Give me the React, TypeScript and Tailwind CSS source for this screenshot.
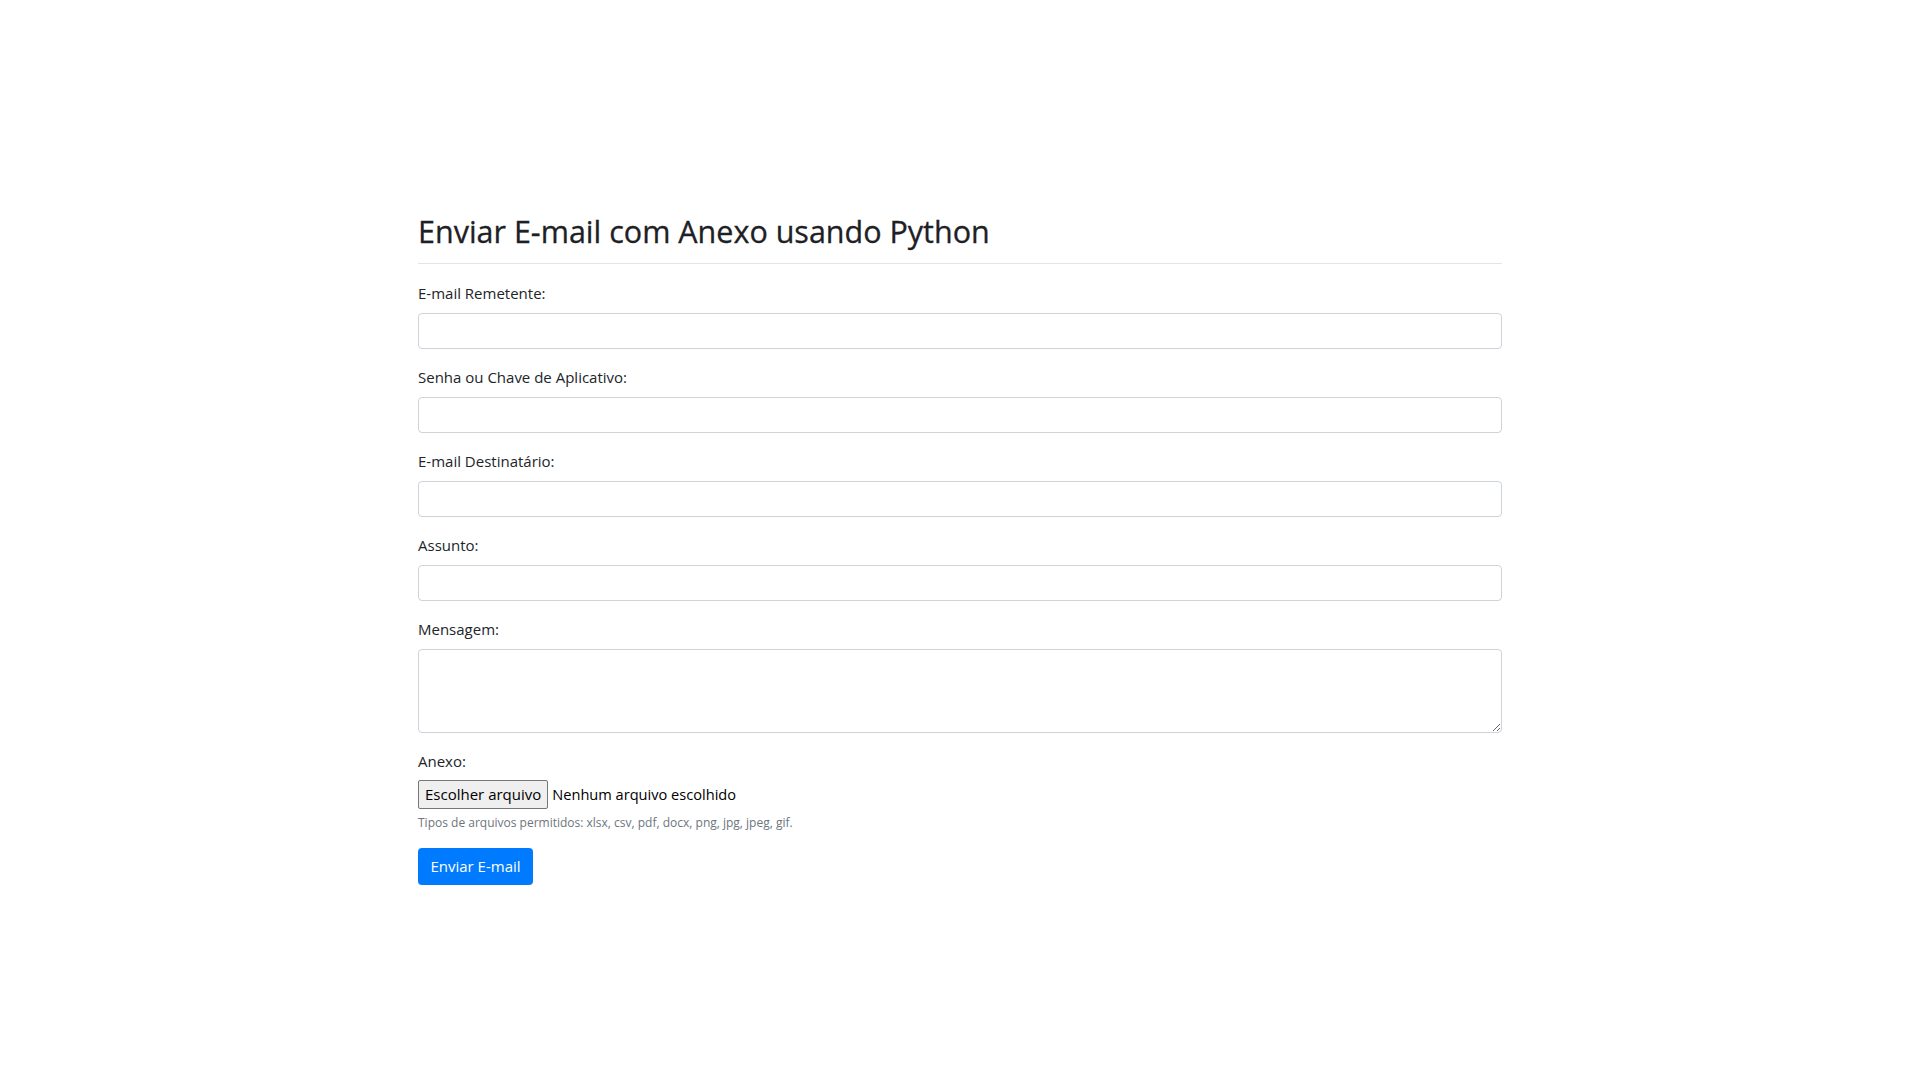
import { useState } from "react";

const fields = [
  { id: "remetente", label: "E-mail Remetente:", type: "email" },
  { id: "senha", label: "Senha ou Chave de Aplicativo:", type: "password" },
  { id: "destinatario", label: "E-mail Destinatário:", type: "email" },
  { id: "assunto", label: "Assunto:", type: "text" },
];

export default function App() {
  const [values, setValues] = useState<Record<string, string>>({});
  const [mensagem, setMensagem] = useState("");

  const handleSubmit = (e: React.FormEvent) => {
    e.preventDefault();
  };

  return (
    <div
      className="min-h-screen bg-white text-[#212529]"
      style={{ fontFamily: '"Open Sans", "Noto Sans", sans-serif' }}
    >
      <div className="mx-auto w-[1084px] pt-[212px]">
        {/* Title */}
        <h2 className="text-[30.5px] leading-[38px] font-normal text-[#1d2125] [-webkit-text-stroke:0.3px_#1d2125] pb-[13px] border-b border-[#e5e5e5]">
          Enviar E-mail com Anexo usando Python
        </h2>

        <form onSubmit={handleSubmit} className="mt-[17px]">
          {fields.map((f) => (
            <div key={f.id} className="mb-4">
              <label htmlFor={f.id} className="block text-[15px] leading-6 mb-2">
                {f.label}
              </label>
              <input
                id={f.id}
                type={f.type}
                value={values[f.id] || ""}
                onChange={(e) => setValues({ ...values, [f.id]: e.target.value })}
                className="block w-full h-[36px] px-3 rounded border border-[#ced4da] bg-white focus:outline-none"
              />
            </div>
          ))}

          <div className="mb-4">
            <label htmlFor="mensagem" className="block text-[15px] leading-6 mb-2">
              Mensagem:
            </label>
            <textarea
              id="mensagem"
              value={mensagem}
              onChange={(e) => setMensagem(e.target.value)}
              className="block w-full h-[84px] px-3 py-1.5 rounded border border-[#ced4da] bg-white focus:outline-none"
            />
          </div>

          <div className="mb-4">
            <label className="block text-[15px] leading-6 mb-[7px]">Anexo:</label>
            <div className="flex items-center gap-[4px] text-[15px]">
              <button
                type="button"
                className="h-[29px] px-[6px] rounded-[2px] border border-[#767676] bg-[#efefef] text-[15px] text-black"
              >
                Escolher arquivo
              </button>
              <span className="text-black text-[14.6px]">Nenhum arquivo escolhido</span>
            </div>
            <small className="block mt-1 text-[12px] leading-[19px] text-[#6c757d]">
              Tipos de arquivos permitidos: xlsx, csv, pdf, docx, png, jpg, jpeg, gif.
            </small>
          </div>

          <button
            type="submit"
            className="h-[37px] w-[115px] rounded bg-[#007bff] text-white text-[15px]"
          >
            Enviar E-mail
          </button>
        </form>
      </div>
    </div>
  );
}
